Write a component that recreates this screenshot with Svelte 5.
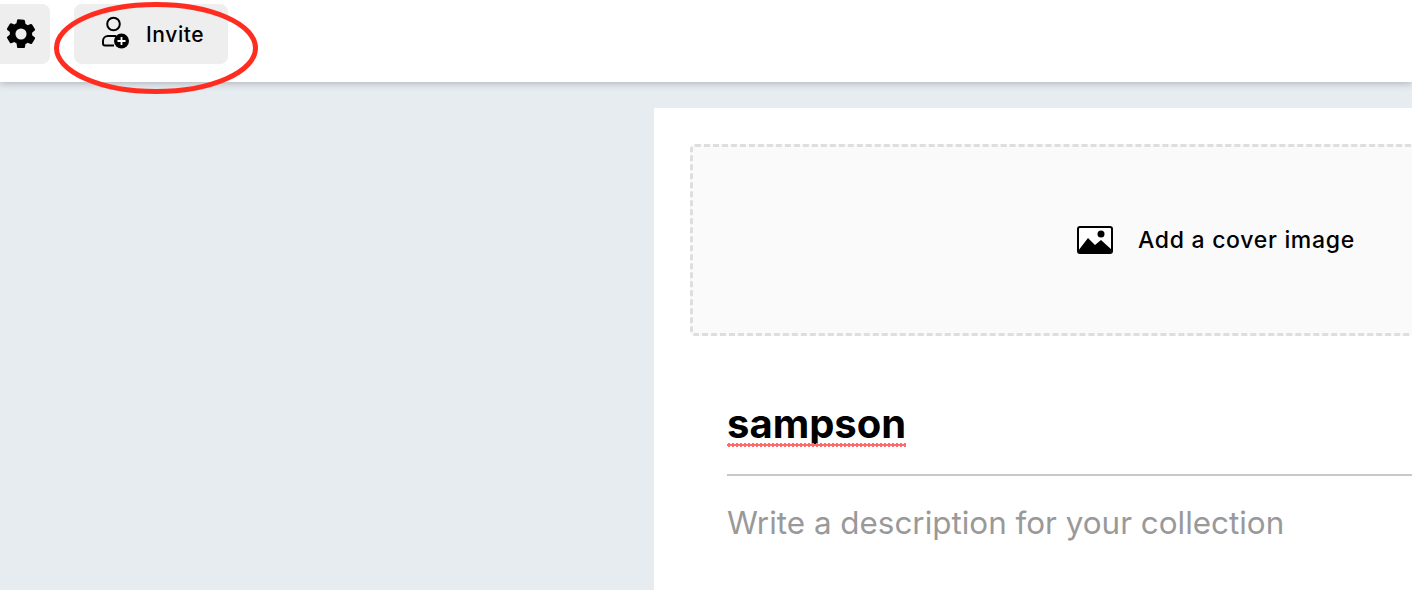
<script lang="ts">
	let title = 'sampson';
	let description = 'Write a description for your collection';
</script>

<div class="page">
	<header class="topbar">
		<button class="tool gear" aria-label="Settings">
			<svg width="36" height="36" viewBox="0 0 24 24" fill="currentColor" fill-rule="evenodd">
				<path d="M13.9 2.5c.3 0 .6.2.7.6l.4 2.200c.5.2 1 .5 1.400.8l2.100-.8c.3-.1.7 0 .9.3l1.900 3.200c.2.3.1.7-.2.9l-1.700 1.400a7 7 0 0 1 0 1.700l1.700 1.400c.3.2.4.6.2.9l-1.900 3.200c-.2.3-.6.4-.9.3l-2.100-.8c-.4.3-.9.6-1.400.8l-.4 2.200c-.1.4-.4.6-.7.6h-3.800c-.3 0-.6-.2-.7-.6L9 18.200c-.5-.2-1-.5-1.400-.8l-2.100.8c-.3.1-.7 0-.9-.3l-1.900-3.200c-.2-.3-.1-.7.2-.9l1.700-1.400a7 7 0 0 1 0-1.700L2.900 9.300c-.3-.2-.4-.6-.2-.9l1.900-3.200c.2-.3.6-.4.9-.3l2.100.8c.4-.3.9-.6 1.400-.8l.4-2.200c.1-.4.4-.6.7-.6zM12 8.300a3.700 3.700 0 1 0 0 7.400 3.700 3.700 0 0 0 0-7.400z" />
			</svg>
		</button>
		<button class="tool invite">
			<svg class="invite-icon" width="30" height="34" viewBox="0 0 30 34">
				<circle cx="13.500" cy="8" r="6.300" fill="none" stroke="currentColor" stroke-width="2" />
				<path d="M16 20h-8a5 5 0 0 0-5 5v2.500a2 2 0 0 0 2 2h9" fill="none" stroke="currentColor" stroke-width="2" />
				<circle cx="21.500" cy="25" r="7.500" fill="currentColor" />
				<path d="M21.500 21v8M17.500 25h8" stroke="#fff" stroke-width="1.800" />
			</svg>
			<span>Invite</span>
		</button>
	</header>

	<main class="content">
		<section class="sheet">
			<div class="cover">
				<svg width="36" height="28" viewBox="0 0 36 28">
					<rect x="1" y="1" width="34" height="26" rx="2" fill="#fff" stroke="#000" stroke-width="2" />
					<path d="M1 25 L11 12 L18 19 L24 14 L35 24 V27 H1 Z" fill="#000" />
					<circle cx="24" cy="8" r="3.500" fill="#000" />
				</svg>
				<span>Add a cover image</span>
			</div>
			<div class="fields">
				<h1 class="title"><span class="misspelt">{title}</span></h1>
				<p class="description">{description}</p>
			</div>
		</section>
	</main>

	<svg class="scribble" width="220" height="100" viewBox="0 0 220 100">
		<ellipse cx="105" cy="47" rx="99.500" ry="43.500" fill="none" stroke="#ff2d20" stroke-width="5" />
	</svg>
</div>

<style>
	:global(body) {
		margin: 0;
		background: #e7ecf0;
		overflow: hidden;
	}

	.page {
		position: relative;
		width: 1412px;
		height: 590px;
		overflow: hidden;
		font-family: Inter, "Liberation Sans", sans-serif;
		color: #000;
	}

	.topbar {
		display: flex;
		align-items: center;
		gap: 24px;
		height: 82px;
		box-sizing: border-box;
		padding: 0 0 14px;
		background: #fff;
		box-shadow: 0 2px 7px rgba(60, 70, 80, 0.3);
		position: relative;
	}

	.tool {
		display: flex;
		align-items: center;
		height: 60px;
		border: 0;
		border-radius: 8px;
		background: #eeeeee;
		color: #000;
		font: inherit;
		padding: 0;
	}

	.gear {
		width: 60px;
		margin-left: -10px;
		justify-content: center;
		padding-left: 2px;
	}

	.invite {
		width: 154px;
		padding-left: 26px;
		gap: 16px;
		box-sizing: border-box;
		font-size: 21px;
		font-weight: 500;
		letter-spacing: 0.6px;
	}

	.invite-icon {
		flex: none;
		margin-top: -2px;
	}

	.content {
		display: flex;
		justify-content: flex-start;
		padding: 26px 0 0 654px;
	}

	.sheet {
		flex: none;
		width: 1124px;
		height: 560px;
		box-sizing: border-box;
		padding: 36px;
		background: #fff;
	}

	.cover {
		display: flex;
		align-items: center;
		justify-content: center;
		gap: 25px;
		height: 192px;
		box-sizing: border-box;
		border: 3px dashed #dedede;
		border-radius: 5px;
		background: #fafafa;
		font-size: 23px;
		font-weight: 500;
		letter-spacing: 0.7px;
	}

	.fields {
		padding: 60px 0 0 37px;
	}

	.title {
		margin: 0;
		height: 80px;
		box-sizing: border-box;
		border-bottom: 2px solid #c8c8c8;
		font-size: 40px;
		font-weight: 700;
		line-height: 56px;
	}

	.misspelt {
		display: inline-block;
		position: relative;
	}

	.misspelt::after {
		content: '';
		position: absolute;
		left: 0;
		right: 0;
		bottom: 5px;
		height: 4px;
		background: radial-gradient(circle, #ff6b6b 1.700px, transparent 2px) 0 0 / 4px 4px repeat-x;
	}

	.description {
		margin: 27px 0 0;
		font-size: 31.400px;
		line-height: 40px;
		color: #999;
	}

	.scribble {
		position: absolute;
		left: 51px;
		top: 1px;
	}
</style>
